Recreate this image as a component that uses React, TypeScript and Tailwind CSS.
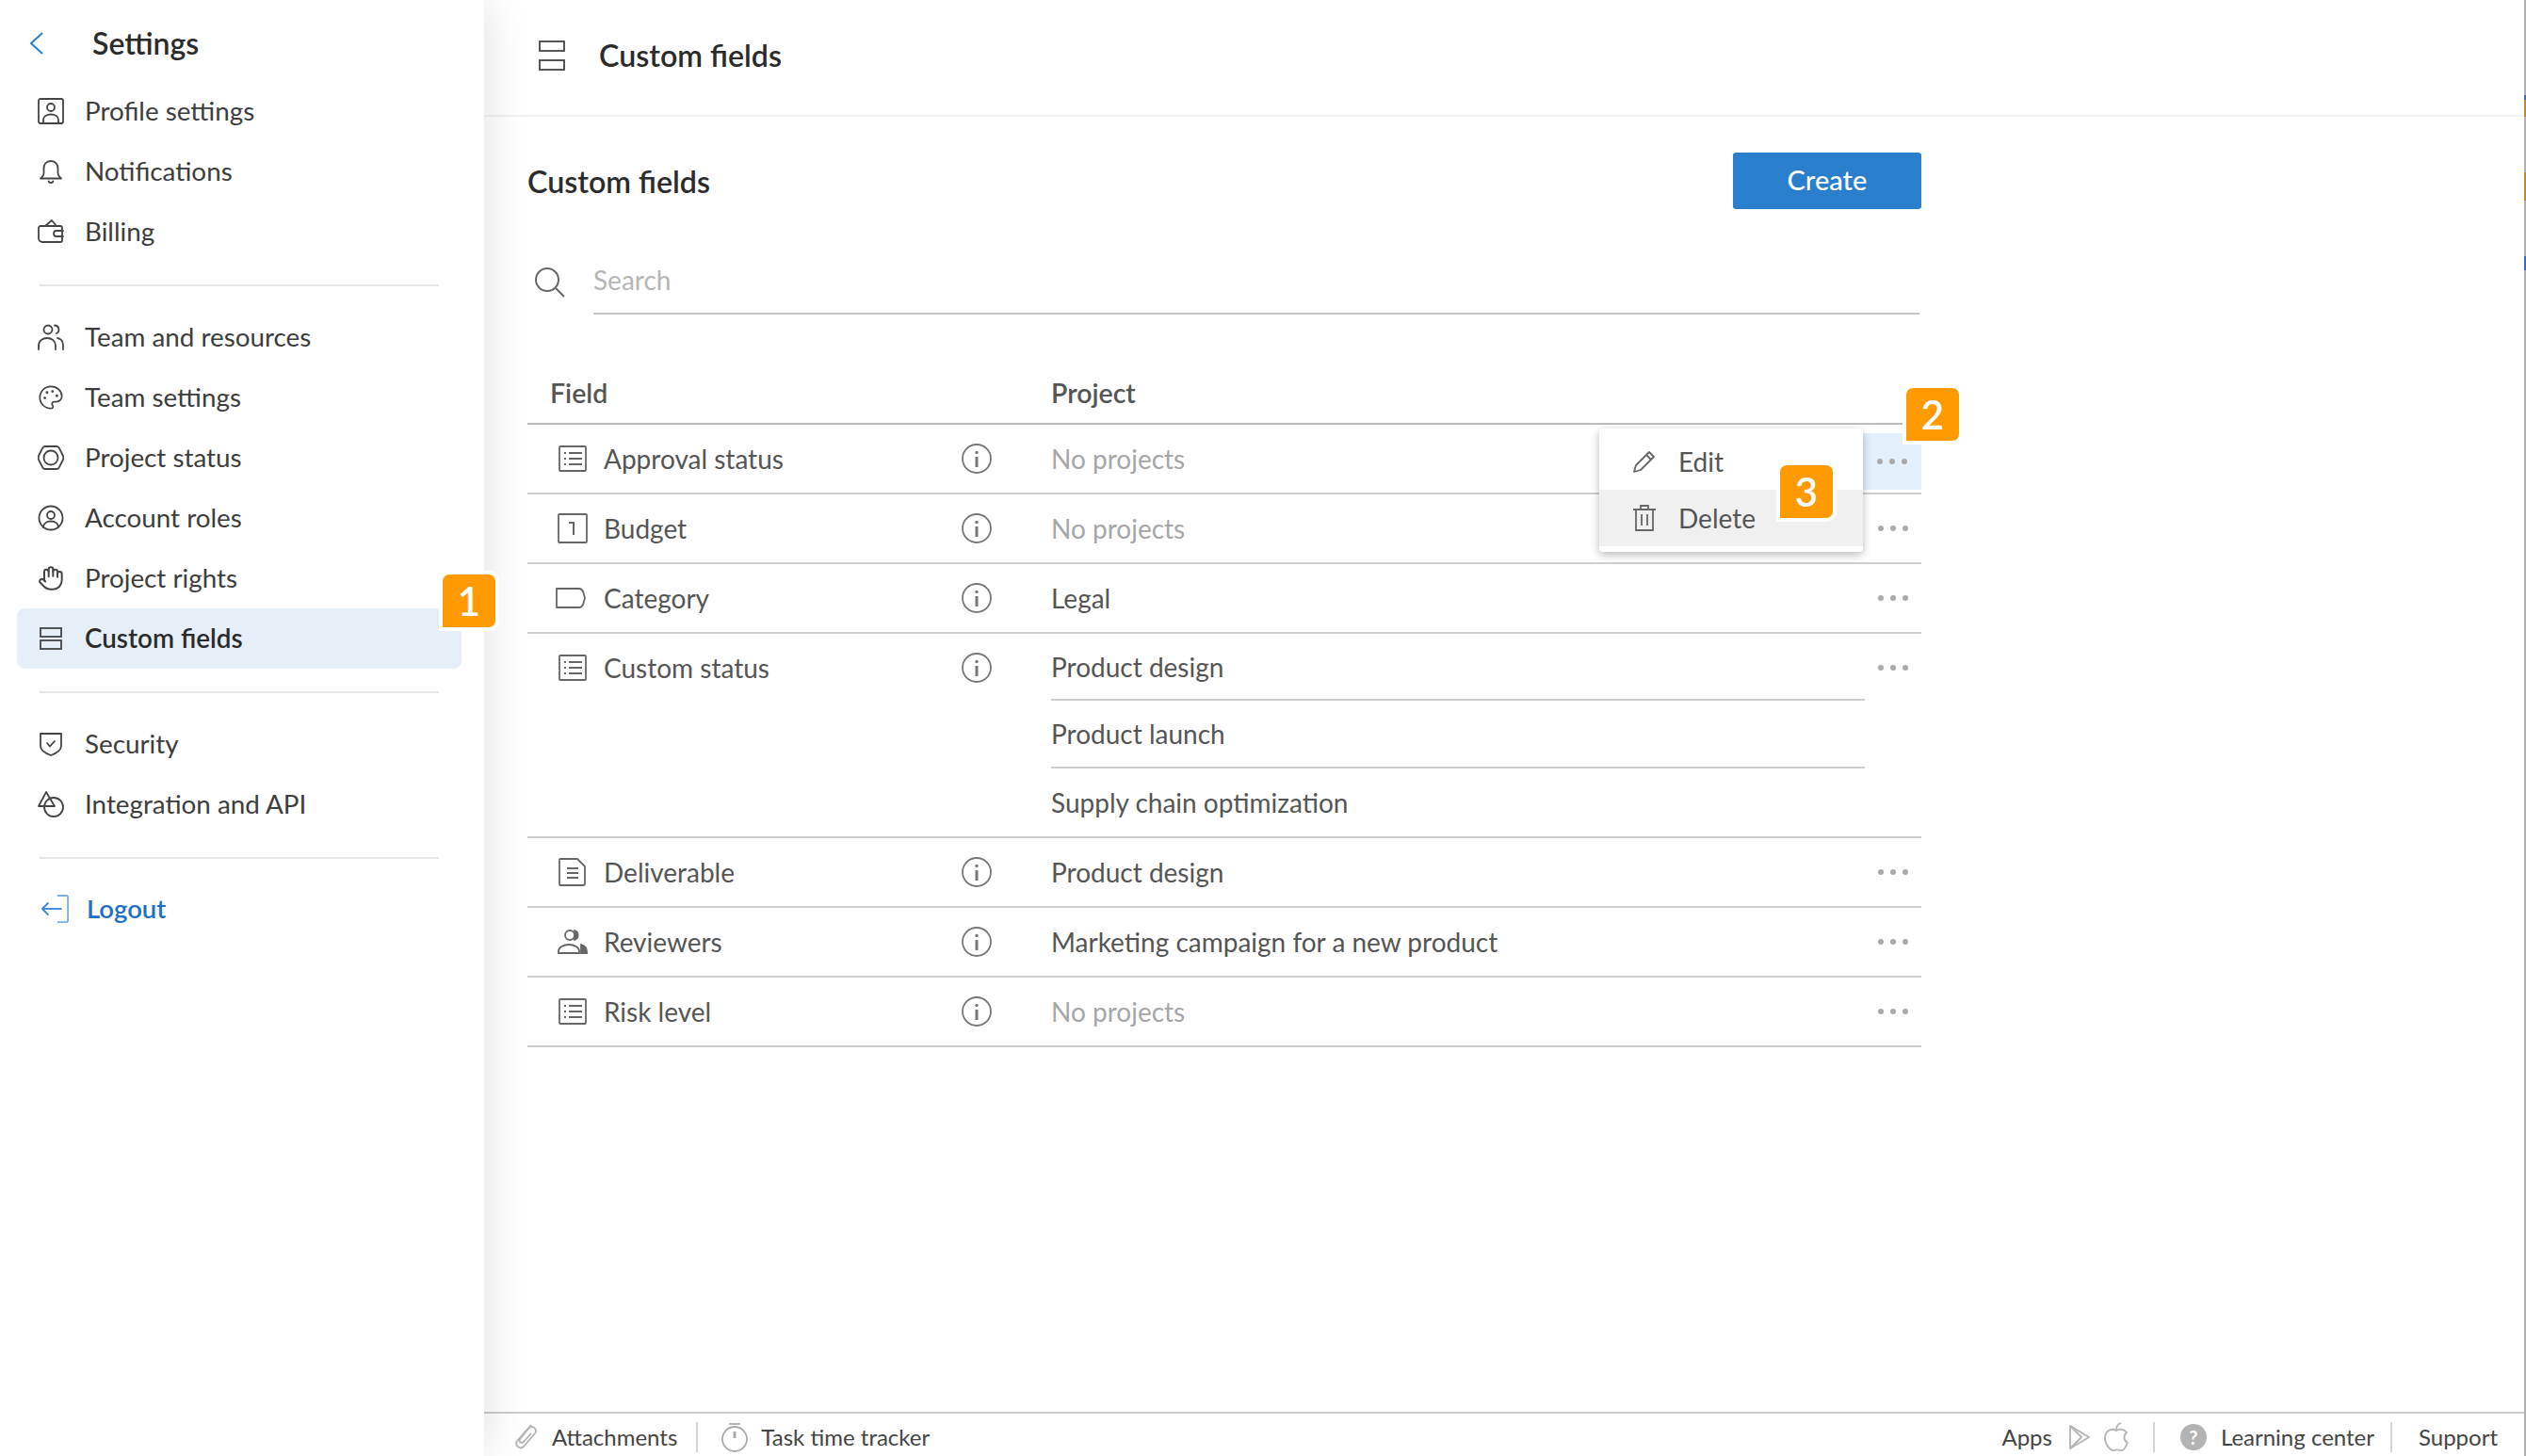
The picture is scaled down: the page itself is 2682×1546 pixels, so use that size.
import React from "react";
import { Palette, Hand } from "lucide-react";

type IconProps = { className?: string };
const Svg = ({ className, vb = "0 0 28 28", sw = 1.8, children }: { className?: string; vb?: string; sw?: number; children: React.ReactNode }) => (
  <svg viewBox={vb} fill="none" stroke="currentColor" strokeWidth={sw} strokeLinecap="round" strokeLinejoin="round" className={className}>
    {children}
  </svg>
);

const ProfileIcon = ({ className }: IconProps) => (
  <Svg className={className}>
    <rect x="1" y="1" width="26" height="26" rx="2" />
    <circle cx="14" cy="10" r="4" />
    <path d="M6 26v-3c0-3.500 3.500-5.500 8-5.500s8 2 8 5.500v3" />
  </Svg>
);
const BellIcon = ({ className }: IconProps) => (
  <Svg className={className}>
    <path d="M14 3c-5 0-7.500 3.500-7.500 8v5c0 2.500-2 4-3.500 5.500h22c-1.500-1.500-3.500-3-3.500-5.500v-5c0-4.500-2.500-8-7.500-8z" />
    <path d="M11.500 24.500c.5 2 4.500 2 5 0" />
  </Svg>
);
const WalletIcon = ({ className }: IconProps) => (
  <Svg className={className}>
    <path d="M3 8h21a2 2 0 0 1 2 2v13a2 2 0 0 1-2 2H5a4 4 0 0 1-4-4V10a2 2 0 0 1 2-2z" />
    <path d="M8 8l7-6 5 6" />
    <path d="M27 13h-7a3 3 0 0 0 0 6h7" />
  </Svg>
);
const TeamIcon = ({ className }: IconProps) => (
  <Svg className={className}>
    <circle cx="11" cy="6" r="4.500" />
    <path d="M18 1.500a4.500 4.500 0 0 1 2 8.500" />
    <path d="M1 27v-4c0-5 4-8 9-8s9 3 9 8v4" />
    <path d="M21 15c3.500.5 6 3.500 6 7.500V27" />
  </Svg>
);
const StatusIcon = ({ className }: IconProps) => (
  <Svg className={className}>
    <path d="M8 2h12c1 0 2 .5 2.500 1.200L26.500 11a6 6 0 0 1 0 6l-4 7.800c-.5.8-1.500 1.200-2.500 1.200H8c-1 0-2-.4-2.500-1.200L1.500 17a6 6 0 0 1 0-6l4-7.800C6 2.500 7 2 8 2z" />
    <circle cx="14" cy="14" r="7.500" />
  </Svg>
);
const RolesIcon = ({ className }: IconProps) => (
  <Svg className={className}>
    <circle cx="14" cy="14" r="12.500" />
    <circle cx="14" cy="11" r="4" />
    <path d="M6 24c0-4 3.500-6.500 8-6.500s8 2.500 8 6.500" />
  </Svg>
);
const FieldsSmall = ({ className }: IconProps) => (
  <svg viewBox="0 0 24 24" fill="none" stroke="currentColor" strokeWidth="1.800" className={className}>
    <rect x="1" y="1" width="22" height="9" />
    <rect x="1" y="14" width="22" height="9" />
  </svg>
);
const FieldsLarge = ({ className }: IconProps) => (
  <svg viewBox="0 0 28 32" fill="none" stroke="currentColor" strokeWidth="1.800" className={className}>
    <rect x="1" y="1" width="26" height="10" />
    <rect x="1" y="21" width="26" height="10" />
  </svg>
);
const ShieldIcon = ({ className }: IconProps) => (
  <Svg className={className}>
    <path d="M3 3h22v13c0 4-3 7-11 10C6 23 3 20 3 16z" />
    <path d="M10 13l3 3.500 5-5.500" />
  </Svg>
);
const IntegrationIcon = ({ className }: IconProps) => (
  <Svg className={className}>
    <path d="M9 1L1 16h17z" />
    <circle cx="17" cy="17" r="10" />
  </Svg>
);
const LogoutIcon = ({ className }: IconProps) => (
  <svg viewBox="0 0 32 32" fill="none" strokeWidth="2" className={className}>
    <path d="M1 16h22" stroke="#3f86d6" />
    <path d="M8 9l-7 7 7 7" stroke="#3f86d6" strokeLinejoin="round" />
    <path d="M18 1h10a2 2 0 0 1 2 2v26a2 2 0 0 1-2 2H18" stroke="#7eaee4" />
  </svg>
);
const ListIcon = ({ className }: IconProps) => (
  <svg viewBox="0 0 30 28" fill="none" stroke="currentColor" strokeWidth="1.800" className={className}>
    <rect x="1" y="1" width="28" height="26" rx="1" />
    <path d="M11 8h14M11 14h14M11 20h14" />
    <path d="M6 8h2M6 14h2M6 20h2" />
  </svg>
);
const NumberIcon = ({ className }: IconProps) => (
  <svg viewBox="0 0 32 32" fill="none" stroke="currentColor" strokeWidth="1.800" className={className}>
    <rect x="1" y="1" width="30" height="30" rx="1" />
    <path d="M12 10h5v13" strokeWidth="2" />
  </svg>
);
const TagIcon = ({ className }: IconProps) => (
  <svg viewBox="0 0 32 22" fill="none" stroke="currentColor" strokeWidth="1.800" strokeLinejoin="round" className={className}>
    <path d="M1 1h24c2 0 3 1 4 3l2 7-2 7c-1 2-2 3-4 3H1z" />
  </svg>
);
const DocIcon = ({ className }: IconProps) => (
  <svg viewBox="0 0 30 30" fill="none" stroke="currentColor" strokeWidth="1.800" strokeLinejoin="round" className={className}>
    <path d="M2 1h18l8 8v18a2 2 0 0 1-2 2H2a1 1 0 0 1-1-1V2a1 1 0 0 1 1-1z" />
    <path d="M9 11h12M9 16h12M9 21h12" />
  </svg>
);
const ReviewersIcon = ({ className }: IconProps) => (
  <svg viewBox="0 0 32 26" fill="none" stroke="currentColor" strokeWidth="1.800" className={className}>
    <circle cx="13" cy="6" r="5" />
    <path d="M18 1.200a5 5 0 0 1 0 9.600z" fill="currentColor" />
    <path d="M1 25v-2c0-4 5-7 11-7s11 3 11 7v2z" />
    <path d="M25 16c3 1 6 3 6 7v2h-6z" fill="currentColor" />
  </svg>
);
const InfoIcon = () => (
  <svg viewBox="0 0 32 32" fill="none" stroke="#777" strokeWidth="1.800" className="h-8 w-8">
    <circle cx="16" cy="16" r="15" />
    <circle cx="16" cy="9.500" r="1.700" fill="#777" stroke="none" />
    <path d="M16 14v11" strokeWidth="3" />
  </svg>
);
const Dots = () => (
  <span className="flex gap-[7px]">
    <span className="h-[6px] w-[6px] rounded-full bg-[#aaaaaa]" />
    <span className="h-[6px] w-[6px] rounded-full bg-[#aaaaaa]" />
    <span className="h-[6px] w-[6px] rounded-full bg-[#aaaaaa]" />
  </span>
);
const Badge = ({ n, className }: { n: number; className: string }) => (
  <div className={`absolute z-30 box-content flex h-14 w-14 items-center justify-center rounded-[11px] rounded-bl-none border-4 border-white bg-[#ff9b00] text-[42px] font-semibold text-white ${className}`}>
    {n}
  </div>
);

const NavItem = ({ icon, label, active }: { icon: React.ReactNode; label: string; active?: boolean }) => (
  <div className={`flex h-16 items-center gap-[22px] rounded-[8px] pl-[22px] text-[27.800px] ${active ? "bg-[#e6eef8] font-semibold text-[#2b2b2b]" : "text-[#3d3d3d]"}`}>
    <span className="flex h-7 w-7 shrink-0 items-center justify-center text-[#444]">{icon}</span>
    <span>{label}</span>
  </div>
);
const Hr = () => <div className="mx-6 h-[2px] bg-[#e6e6e6]" />;

const Muted = ({ children }: { children: React.ReactNode }) => <span className="text-[#a6a6a6]">{children}</span>;

const Row = ({ icon, name, project, tall }: { icon: React.ReactNode; name: string; project?: React.ReactNode; tall?: boolean }) => (
  <div className="flex border-b-2 border-[#cfcfcf] text-[28px] text-[#555]">
    <div className="flex h-[72px] w-[461px] shrink-0 items-center">
      <span className="flex w-[81px] shrink-0 justify-center pl-[14px] text-[#666]">{icon}</span>
      <span>{name}</span>
    </div>
    <div className="flex h-[72px] w-[95px] shrink-0 items-center"><InfoIcon /></div>
    {tall ? (
      <div className="flex w-[864px] shrink-0 flex-col">
        <div className="box-content flex h-[69px] items-center border-b-2 border-[#cfcfcf]">Product design</div>
        <div className="box-content flex h-[70px] items-center border-b-2 border-[#cfcfcf]">Product launch</div>
        <div className="flex h-[72px] items-center">Supply chain optimization</div>
      </div>
    ) : (
      <div className="flex h-[72px] w-[864px] shrink-0 items-center">{project}</div>
    )}
    <div className="flex h-[72px] flex-1 items-center justify-center"><Dots /></div>
  </div>
);

export default function App() {
  return (
    <div className="flex h-[1546px] w-[2682px] overflow-hidden bg-white font-['Lato',sans-serif] text-[#444]">
      <aside className="relative z-10 flex w-[514px] shrink-0 flex-col bg-white pl-[18px] pr-[24px] shadow-[0_0_45px_rgba(0,0,0,0.13)]">
        <div className="flex h-[86px] items-center pl-[14px] pt-[5px]">
          <svg viewBox="0 0 14 24" fill="none" stroke="#2a7fd5" strokeWidth="2" className="h-6 w-[14px]"><path d="M13 1L1 12l12 11" /></svg>
          <span className="ml-[52px] text-[32px] font-semibold text-[#2b2b2b]">Settings</span>
        </div>
        <NavItem icon={<ProfileIcon className="h-7 w-7" />} label="Profile settings" />
        <NavItem icon={<BellIcon className="h-7 w-7" />} label="Notifications" />
        <NavItem icon={<WalletIcon className="h-7 w-7" />} label="Billing" />
        <div className="mb-[22px] mt-[24px]"><Hr /></div>
        <NavItem icon={<TeamIcon className="h-7 w-7" />} label="Team and resources" />
        <NavItem icon={<Palette className="h-[30px] w-[30px]" strokeWidth={1.500} />} label="Team settings" />
        <NavItem icon={<StatusIcon className="h-7 w-7" />} label="Project status" />
        <NavItem icon={<RolesIcon className="h-7 w-7" />} label="Account roles" />
        <NavItem icon={<Hand className="h-[30px] w-[30px]" strokeWidth={1.700} />} label="Project rights" />
        <NavItem active icon={<FieldsSmall className="h-6 w-6" />} label="Custom fields" />
        <div className="mb-[22px] mt-[24px]"><Hr /></div>
        <NavItem icon={<ShieldIcon className="h-7 w-7" />} label="Security" />
        <NavItem icon={<IntegrationIcon className="h-7 w-7" />} label="Integration and API" />
        <div className="mb-[21px] mt-[24px]"><Hr /></div>
        <div className="flex h-[64px] items-center gap-[18px] pl-[26px] text-[27.500px] font-semibold text-[#1f6fc4]">
          <LogoutIcon className="h-8 w-[30px]" />
          <span>Logout</span>
        </div>
        <Badge n={1} className="left-[466px] top-[606px]" />
      </aside>

      <main className="relative flex min-w-0 flex-1 flex-col border-r-2 border-[#b0b0b0]">
        <span className="absolute -right-[2px] top-[101px] h-[5px] w-[2px] bg-[#2e6fc0]" />
        <span className="absolute -right-[2px] top-[106px] h-[18px] w-[2px] bg-[#c08a20]" />
        <span className="absolute -right-[2px] top-[183px] h-[30px] w-[2px] bg-[#c08a20]" />
        <span className="absolute -right-[2px] top-[272px] h-[15px] w-[2px] bg-[#2e6fc0]" />
        <header className="flex h-[124px] shrink-0 items-center border-b-2 border-[#f2f2f2] pb-[4px] pl-[58px]">
          <FieldsLarge className="h-8 w-7 text-[#444]" />
          <h1 className="ml-[36px] text-[32.200px] font-semibold text-[#2b2b2b]">Custom fields</h1>
        </header>

        <section className="flex-1 pl-[46px]">
          <div className="relative w-[1480px]">
            <div className="flex h-[98px] items-end justify-between">
              <h2 className="pb-[5px] text-[32.200px] font-semibold text-[#2b2b2b]">Custom fields</h2>
              <button className="flex h-[60px] w-[200px] items-center justify-center rounded-[3px] bg-[#2a7fcd] pb-[2px] text-[29px] font-medium text-white">Create</button>
            </div>
            <div className="mt-[40px] flex h-[72px] items-stretch pr-[2px]">
              <div className="flex w-[70px] shrink-0 items-center pl-[8px] pt-[4px] text-[#666]">
                <svg viewBox="0 0 32 32" fill="none" stroke="currentColor" strokeWidth="2" className="h-8 w-8"><circle cx="13" cy="13" r="12" /><path d="M22 22l9 9" /></svg>
              </div>
              <div className="flex flex-1 items-center border-b-2 border-[#c6c6c6] text-[28px] text-[#b5b5b5]">Search</div>
            </div>
            <div className="mt-[43px] flex h-[74px] items-center border-b-2 border-[#bdbdbd] pt-[8px] text-[28.500px] font-semibold text-[#555]">
              <span className="w-[556px] pl-[24px]">Field</span>
              <span>Project</span>
            </div>
            <Row icon={<ListIcon className="h-7 w-[30px]" />} name="Approval status" project={<Muted>No projects</Muted>} />
            <Row icon={<NumberIcon className="h-8 w-8" />} name="Budget" project={<Muted>No projects</Muted>} />
            <Row icon={<TagIcon className="-ml-[3px] h-[22px] w-8" />} name="Category" project="Legal" />
            <Row tall icon={<ListIcon className="h-7 w-[30px]" />} name="Custom status" />
            <Row icon={<DocIcon className="h-[30px] w-[30px]" />} name="Deliverable" project="Product design" />
            <Row icon={<ReviewersIcon className="h-[26px] w-8" />} name="Reviewers" project="Marketing campaign for a new product" />
            <Row icon={<ListIcon className="h-7 w-[30px]" />} name="Risk level" project={<Muted>No projects</Muted>} />

            <div className="absolute left-[1418px] top-[336px] flex h-[60px] w-[62px] items-center justify-center bg-[#e3f0fb]"><Dots /></div>
            <div className="absolute left-[1138px] top-[331px] z-20 w-[280px] rounded-[4px] bg-white pb-[6px] text-[28px] text-[#555] shadow-[0_3px_10px_rgba(0,0,0,0.28)]">
              <div className="flex h-[65px] items-center gap-[23px] pl-[35px] pt-[4px]">
                <svg viewBox="0 0 26 26" fill="none" stroke="#666" strokeWidth="1.800" strokeLinejoin="round" className="h-[26px] w-[26px]">
                  <path d="M2 24l2-7L18 3l5 5L9 22z" />
                  <path d="M15 6l5 5" />
                </svg>
                <span>Edit</span>
              </div>
              <div className="flex h-[60px] items-center gap-[23px] bg-[#f0f0f0] pl-[35px]">
                <svg viewBox="0 0 26 28" fill="none" stroke="#666" strokeWidth="1.800" className="h-7 w-[26px]">
                  <path d="M1 5h24M4 5v22h18V5M9 5V1h8v4M10 10v12M16 10v12" />
                </svg>
                <span>Delete</span>
              </div>
            </div>
            <Badge n={2} className="left-[1460px] top-[284px]" />
            <Badge n={3} className="left-[1326px] top-[366px]" />
          </div>
        </section>

        <footer className="flex h-[47px] shrink-0 items-center border-t-2 border-[#cccccc] pl-[32px] pr-[28px] pt-[4px] text-[24px] text-[#444]">
          <svg viewBox="0 0 24 30" fill="none" stroke="#b3b3b3" strokeWidth="1.800" className="h-[30px] w-6 shrink-0">
            <path d="M18 2L3 19c-3 4 3 10 7 6L22 11c3-4-2-9-6-6L6 17c-2 3 2 5 4 3l8-9" />
          </svg>
          <span className="ml-[16px]">Attachments</span>
          <span className="ml-[20px] h-8 w-[2px] bg-[#d5d5d5]" />
          <svg viewBox="0 0 28 32" fill="none" stroke="#aaa" strokeWidth="1.800" className="ml-[25px] h-8 w-7 shrink-0">
            <circle cx="14" cy="18" r="13" /><path d="M8 2h12" /><path d="M14 10v7" strokeWidth="3" />
          </svg>
          <span className="ml-[14px]">Task time tracker</span>
          <span className="ml-auto">Apps</span>
          <svg viewBox="0 0 24 26" fill="none" stroke="#b3b3b3" strokeWidth="1.800" strokeLinejoin="round" className="ml-[17px] h-[26px] w-6">
            <path d="M2 1l20 12L2 25z" /><path d="M2 1l12 12L2 25" />
          </svg>
          <svg viewBox="0 0 26 32" fill="none" stroke="#b3b3b3" strokeWidth="1.800" strokeLinejoin="round" className="ml-[14px] h-8 w-[26px]">
            <path d="M13 9c3-2 8-2 11 2-4 3-3 9 1 11-2 5-5 9-8 8-3-1-4-1-6 0-4 1-10-6-10-13 0-8 7-11 12-8z" />
            <path d="M13 8c0-3 2-6 5-7" />
          </svg>
          <span className="ml-[26px] h-8 w-[2px] bg-[#d5d5d5]" />
          <span className="ml-[27px] flex h-7 w-7 items-center justify-center rounded-full bg-[#b3b3b3] text-[20px] font-bold text-white">?</span>
          <span className="ml-[15px]">Learning center</span>
          <span className="ml-[17px] h-8 w-[2px] bg-[#d5d5d5]" />
          <span className="ml-[28px]">Support</span>
        </footer>
      </main>
    </div>
  );
}
